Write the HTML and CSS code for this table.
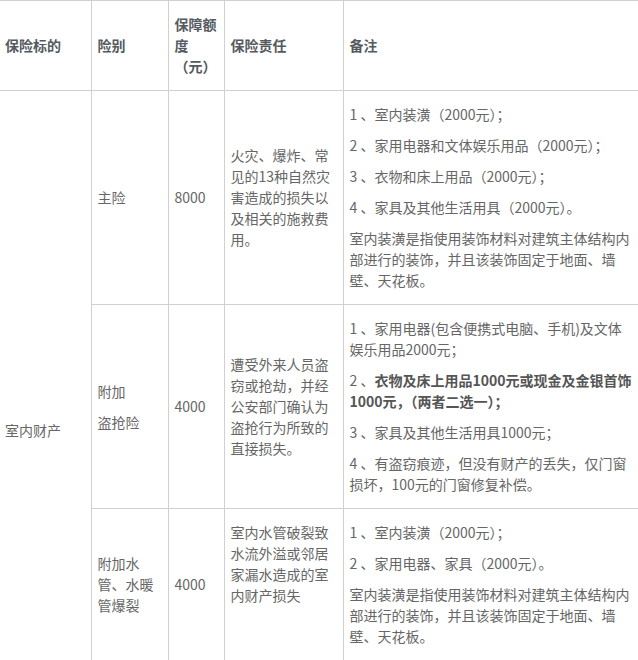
FILE: index.html
```html
<!DOCTYPE html>
<html lang="zh-CN">
<head>
<meta charset="utf-8">
<title>室内财产保险</title>
<link rel="stylesheet" href="styles.css">
</head>
<body>
<table class="ins-table">
  <colgroup>
    <col class="col-target">
    <col class="col-kind">
    <col class="col-amount">
    <col class="col-duty">
    <col class="col-note">
  </colgroup>
  <thead>
    <tr>
      <th class="cell-first"><p>保险标的</p></th>
      <th><p>险别</p></th>
      <th><p>保障额度（元）</p></th>
      <th><p>保险责任</p></th>
      <th class="cell-last"><p>备注</p></th>
    </tr>
  </thead>
  <tbody>
    <tr>
      <td class="cell-first" rowspan="4"><p>室内财产</p></td>
      <td><p>主险</p></td>
      <td><p>8000</p></td>
      <td><p>火灾、爆炸、常见的13种自然灾害造成的损失以及相关的施救费用。</p></td>
      <td class="cell-last">
        <p>1 、室内装潢（2000元）；</p>
        <p>2 、家用电器和文体娱乐用品（2000元）；</p>
        <p>3 、衣物和床上用品（2000元）；</p>
        <p>4 、家具及其他生活用具（2000元）。</p>
        <p>室内装潢是指使用装饰材料对建筑主体结构内部进行的装饰，并且该装饰固定于地面、墙壁、天花板。</p>
      </td>
    </tr>
    <tr>
      <td><p>附加</p><p>盗抢险</p></td>
      <td><p>4000</p></td>
      <td><p>遭受外来人员盗窃或抢劫，并经公安部门确认为盗抢行为所致的直接损失。</p></td>
      <td class="cell-last">
        <p>1 、家用电器(包含便携式电脑、手机)及文体娱乐用品2000元；</p>
        <p>2 、<strong>衣物及床上用品1000元或现金及金银首饰1000元，（两者二选一）；</strong></p>
        <p>3 、家具及其他生活用具1000元；</p>
        <p>4 、有盗窃痕迹，但没有财产的丢失，仅门窗损坏，100元的门窗修复补偿。</p>
      </td>
    </tr>
    <tr>
      <td><p>附加水管、水暖管爆裂</p></td>
      <td><p>4000</p></td>
      <td class="cell-top"><p>室内水管破裂致水流外溢或邻居家漏水造成的室内财产损失</p></td>
      <td class="cell-last">
        <p>1 、室内装潢（2000元）；</p>
        <p>2 、家用电器、家具（2000元）。</p>
        <p>室内装潢是指使用装饰材料对建筑主体结构内部进行的装饰，并且该装饰固定于地面、墙壁、天花板。</p>
      </td>
    </tr>
    <tr class="row-more">
      <td></td>
      <td></td>
      <td></td>
      <td class="cell-last"></td>
    </tr>
  </tbody>
</table>
</body>
</html>
```

FILE: styles.css
```css
html, body {
  margin: 0;
  padding: 0;
  background: #ffffff;
}

body {
  font-family: "Noto Sans CJK SC", "Noto Sans", sans-serif;
  font-size: 14px;
  line-height: 21px;
  color: #666666;
}

.ins-table {
  border-collapse: collapse;
  table-layout: fixed;
  width: 638px;
}

.col-target { width: 91px; }
.col-kind { width: 77px; }
.col-amount { width: 56px; }
.col-duty { width: 119px; }
.col-note { width: 295px; }

.ins-table th,
.ins-table td {
  border: 1px solid #d0d0d0;
  padding: 3px 6px;
  text-align: left;
  vertical-align: middle;
}

.ins-table th {
  font-weight: bold;
  color: #555a60;
}

.ins-table p {
  margin: 10px 0;
}

.ins-table .cell-first {
  border-left: none;
  padding-left: 5px;
}

.ins-table .cell-last {
  border-right: none;
}

.ins-table .cell-top {
  vertical-align: top;
}

.ins-table strong {
  color: #555555;
}

.row-more td {
  height: 103px;
}
```
